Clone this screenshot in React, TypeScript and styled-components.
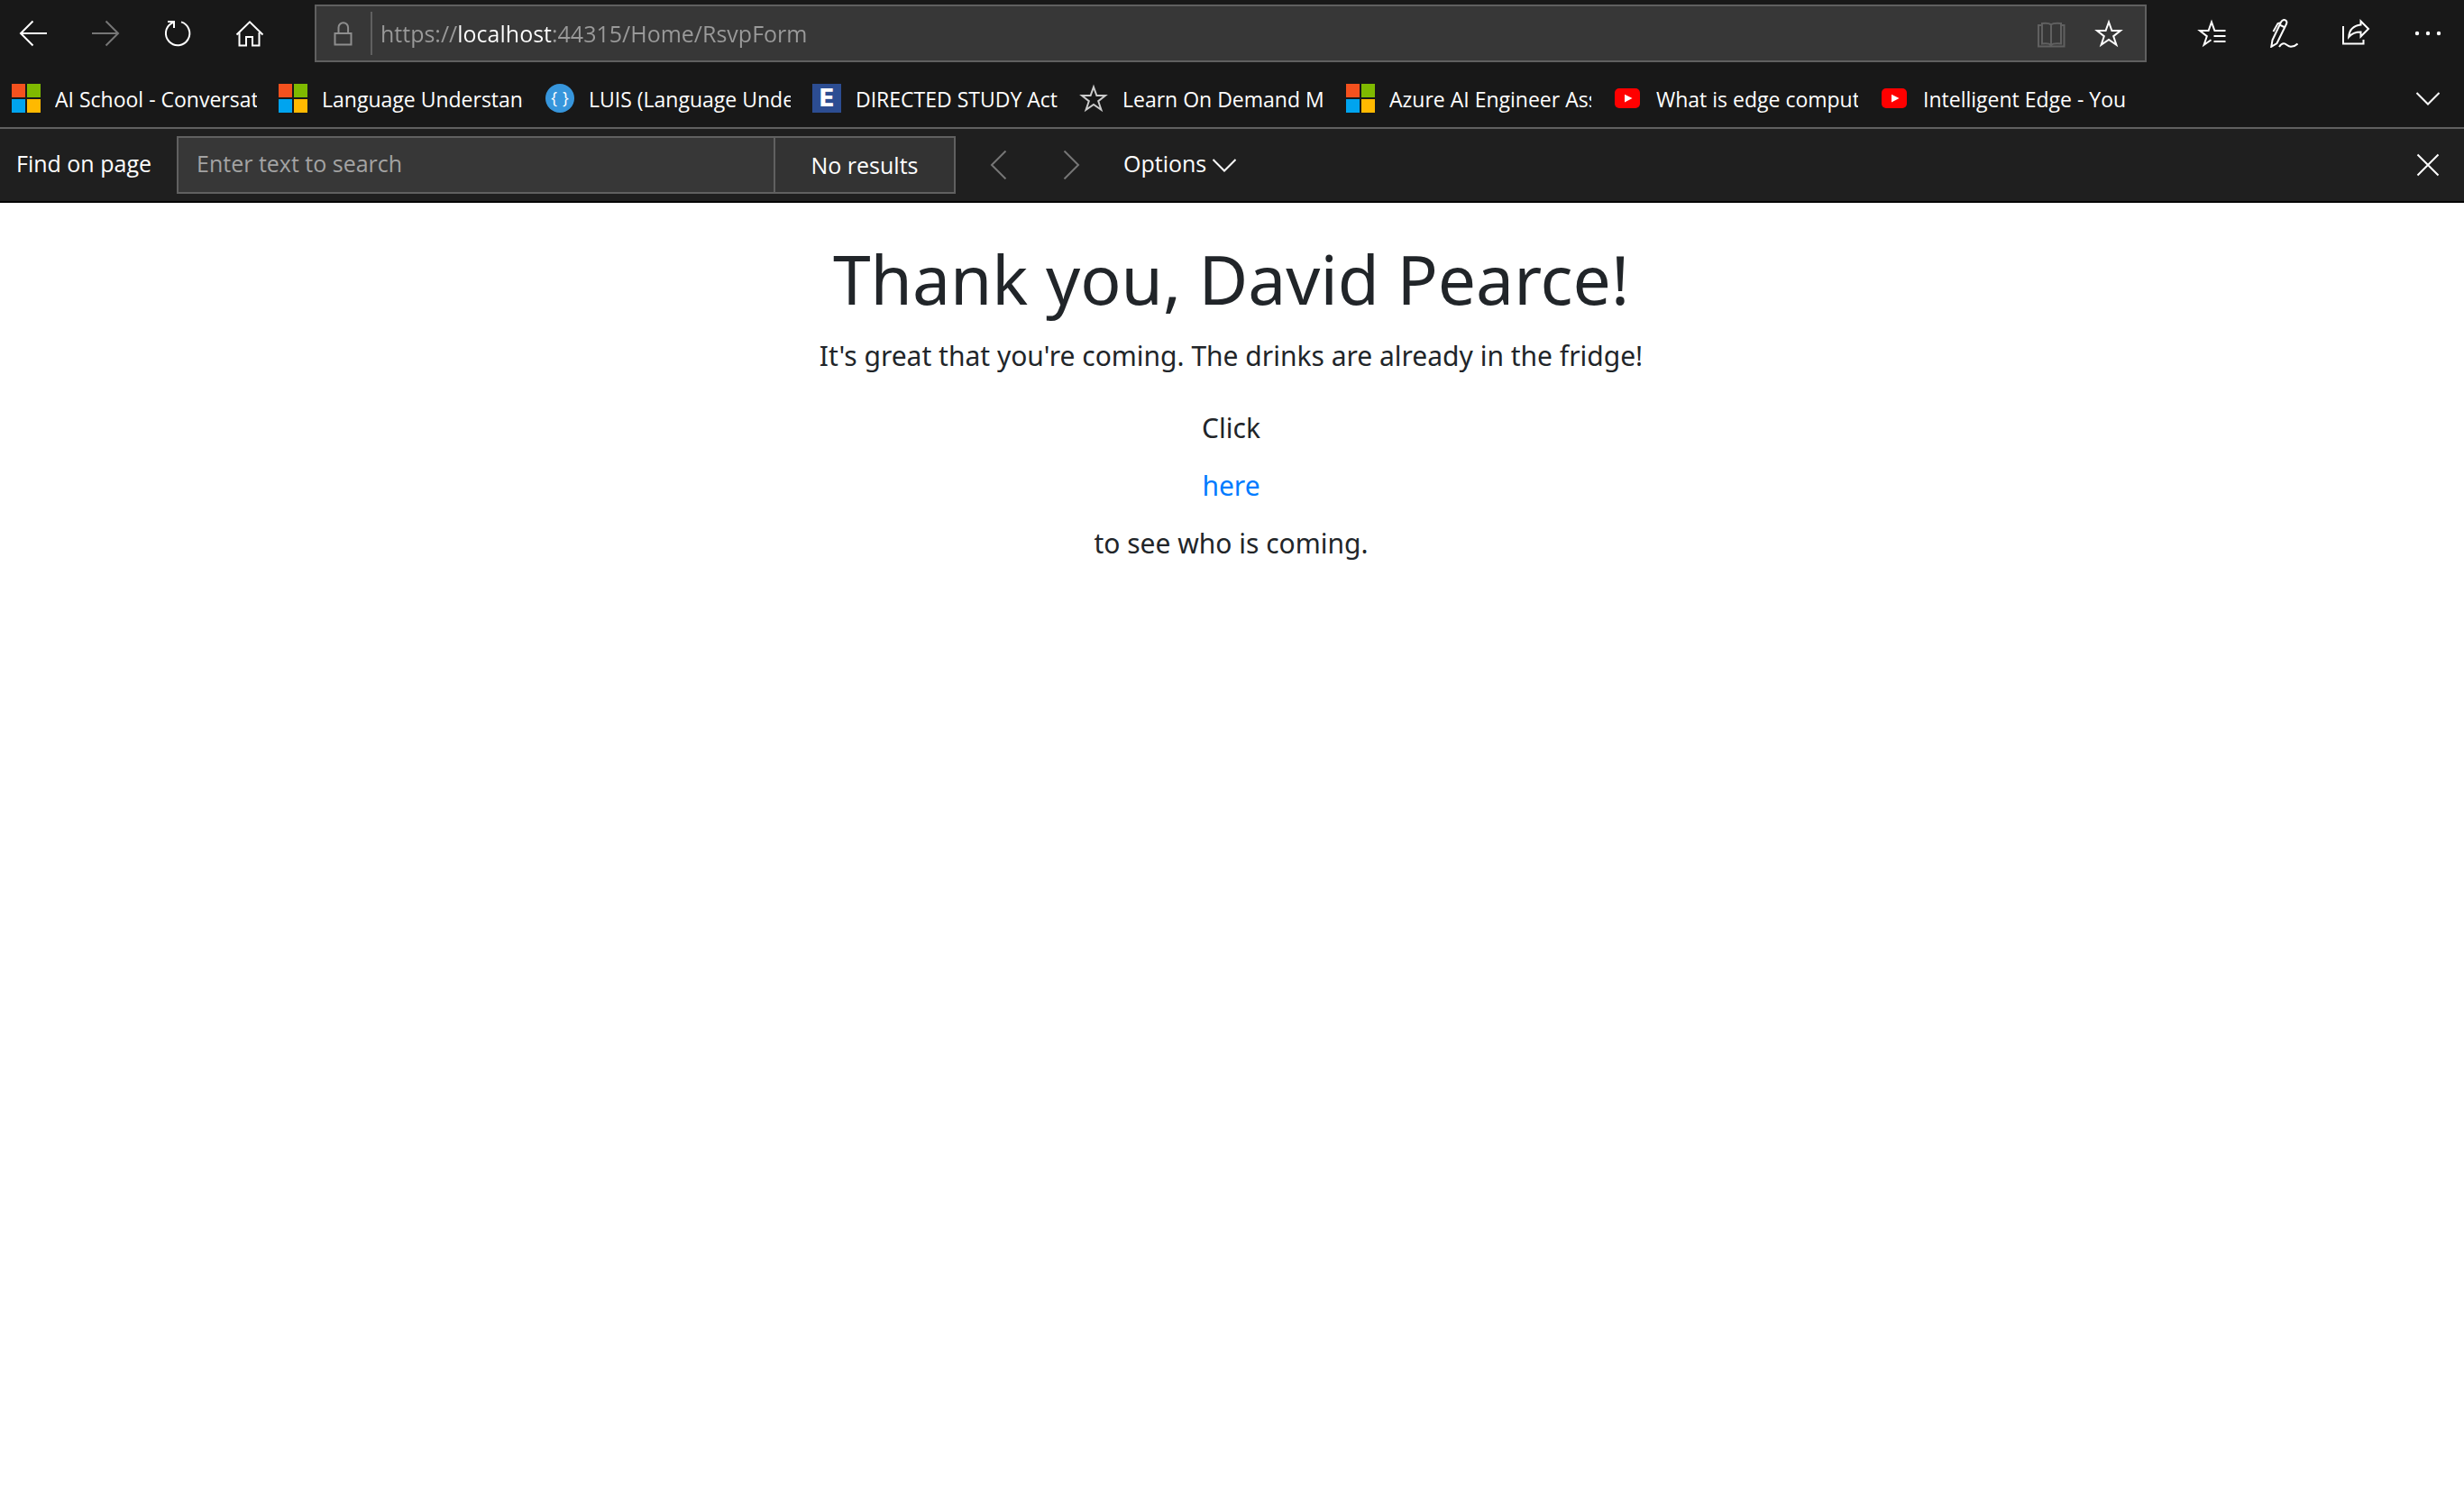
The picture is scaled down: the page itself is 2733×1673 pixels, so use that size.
import React from 'react';
import styled, { createGlobalStyle } from 'styled-components';

const GlobalStyle = createGlobalStyle`
  *, *::before, *::after { box-sizing: border-box; }
  body { margin: 0; background: #fff; }
  button, input { font: inherit; color: inherit; }
`;

const Chrome = styled.header`
  background: #181818;
  color: #fff;
  font-family: "Open Sans", "Noto Sans", sans-serif;
  font-size: 25px;
  line-height: 32px;
  border-bottom: 2px solid #000;
`;

const Toolbar = styled.nav`
  display: flex;
  align-items: center;
  gap: 56px;
  padding: 5px 24px 8px 21px;
`;

const Group = styled.div<{ $gap?: number }>`
  display: flex;
  align-items: center;
  gap: ${(p) => p.$gap ?? 48}px;
`;

const IconButton = styled.button<{ $color?: string }>`
  flex: none;
  display: flex;
  width: 32px;
  height: 32px;
  padding: 0;
  border: 0;
  background: none;
  color: ${(p) => p.$color ?? '#fff'};
`;

const Glyph = styled.svg`
  flex: none;
  display: block;
  width: 32px;
  height: 32px;
  fill: none;
  stroke: currentColor;
  stroke-width: 2;
  stroke-miterlimit: 10;
`;

const AddressBar = styled.div`
  flex: 1;
  min-width: 0;
  height: 64px;
  display: flex;
  align-items: center;
  padding: 0 24px 0 14px;
  background: #373737;
  border: 2px solid #606060;
`;

const LockBox = styled.span`
  display: flex;
  height: 48px;
  align-items: center;
  padding-right: 14px;
  border-right: 2px solid #606060;
  color: #8e8e8e;
`;

const AddressInput = styled.input`
  flex: 1;
  min-width: 0;
  height: 40px;
  margin-left: 9px;
  padding: 0;
  border: 0;
  outline: 0;
  color: transparent;
  caret-color: #fff;
  background: linear-gradient(90deg, #9a9a9a 85px, #fff 85px 190px, #9a9a9a 190px);
  -webkit-background-clip: text;
  background-clip: text;
`;

const FavoritesBar = styled.nav`
  display: flex;
  align-items: center;
  justify-content: space-between;
  height: 66px;
  padding: 0 24px 0 13px;
  border-bottom: 2px solid #606060;
  font-size: 23px;
`;

const Favorite = styled.a`
  display: flex;
  align-items: center;
  gap: 16px;
  color: #fff;
  text-decoration: none;
`;

const FavoriteTitle = styled.span`
  width: 224px;
  padding-top: 2px;
  overflow: hidden;
  white-space: nowrap;
`;

const MicrosoftMark = styled.span`
  width: 32px;
  height: 32px;
  display: grid;
  grid-template-columns: 1fr 1fr;
  gap: 2px;
`;

const Tile = styled.i<{ $color: string }>`
  background: ${(p) => p.$color};
`;

const LuisMark = styled.span`
  width: 32px;
  height: 32px;
  display: flex;
  justify-content: center;
  gap: 6px;
  border-radius: 50%;
  background: #3796dc;
  font-size: 18px;
  line-height: 30px;
`;

const StudyMark = styled.span`
  width: 32px;
  height: 32px;
  background: #2c4d92;
  font: bold 26px/32px "DejaVu Sans", sans-serif;
  text-align: center;
`;

const FindBar = styled.form`
  display: flex;
  align-items: center;
  height: 80px;
  padding: 0 24px 0 18px;
  background: #1f1f1f;
`;

const FindLabel = styled.label`
  width: 178px;
  padding-bottom: 4px;
`;

const FindInput = styled.input`
  flex: 0 1 664px;
  min-width: 0;
  height: 64px;
  padding: 0 20px 4px;
  background: #373737;
  border: 2px solid #606060;
  border-radius: 0;
  outline: 0;
  &::placeholder { color: #a3a3a3; opacity: 1; }
`;

const FindResult = styled.output`
  width: 200px;
  height: 64px;
  margin-right: 32px;
  display: flex;
  align-items: center;
  justify-content: center;
  background: #333;
  border: 2px solid #606060;
  border-left: 0;
`;

const OptionsButton = styled.button`
  display: flex;
  align-items: center;
  gap: 4px;
  margin: 0 auto 0 42px;
  padding: 0;
  border: 0;
  background: none;
`;

const OptionsText = styled.span`
  padding-bottom: 4px;
`;

const Page = styled.main`
  padding: 36px 34px 36px 32px;
  color: #212529;
  font-family: "Noto Sans", "Open Sans", sans-serif;
  font-size: 30px;
  line-height: 48px;
  text-align: center;
`;

const Title = styled.h1`
  margin: 0 0 14px;
  font-size: 75px;
  line-height: 96px;
  font-weight: 400;
`;

const Message = styled.p`
  margin: 0 0 32px;
`;

const Invite = styled.div`
  display: flex;
  flex-direction: column;
  align-items: center;
  gap: 16px;
`;

const PageLink = styled.a`
  color: #007bff;
  text-decoration: none;
`;

const STAR = 'M16 3.5 19.4 13H29l-7.8 6.2 3.2 9.6L16 23l-8.400 5.800 3.200-9.600L3 13h9.600z';

function Icon({ d }: { d: string }) {
  return (
    <Glyph viewBox="0 0 32 32" aria-hidden="true">
      <path d={d} />
    </Glyph>
  );
}

const PATHS = {
  back: 'M31 16H2M15.500 2.500 2 16l13.500 13.500',
  forward: 'M1 16h29M16.500 2.500 30 16 16.500 29.500',
  refresh: 'M20 3.400A13.200 13.200 0 1 1 9.500 4.600L12 3.500M5 3h7v7',
  home: 'M1.500 17.500 16 3.300l14.500 14.200M4.500 15v14.500H12V20h7v9.500h7.500V15',
  lock: 'M6.500 16h18v12.500h-18zM10.500 16V9.500a5.300 5.300 0 0 1 10.600 0V16',
  book: 'M6 7H2v23.500h28.500V7H27M16 6.500C14 4.500 10 4.500 6 5v22.500c4-.5 8-.5 10 1.500 2-2 6-2 11-1.500V5C22 4.500 18 4.500 16 6.500V29',
  starList: 'M31.500 13H19.400L16 3.500 12.600 13H3l7.800 6.200-3.200 9.600L15.500 23.300M18.500 19h13M18.500 25h13',
  pen: 'M3.500 23.500 13 3.500C14.500 1 16.500.5 18.500 1.800c1.500 1.200 1 2.700.3 4.200L8.500 27 2.300 30.800zM13.500 4 9.500 5 4.500 14M12.500 7l5 2.500M11 31c2-3 4-4.200 6-3.600s4 3.500 7 3.400 5-.8 7.500-3.300',
  share: 'M2 8v19.500h22.500V23M21.500 2.500 30 11l-8.500 8.500v-5c-6 0-10 1.500-13.300 5.500.5-7.500 4.800-12.500 13.300-13.500z',
  chevronDown: 'M3.500 10 16 22.500 28.500 10',
  chevronLeft: 'M23.500.5 8 16l15.500 15.500',
  chevronRight: 'M8.500.5 24 16 8.500 31.500',
  close: 'M4.500 4.500l23 23M27.500 4.500l-23 23',
};

const Microsoft = () => (
  <MicrosoftMark>
    <Tile $color="#f4511e" />
    <Tile $color="#7fba00" />
    <Tile $color="#00a4ef" />
    <Tile $color="#ffb900" />
  </MicrosoftMark>
);

const YouTube = () => (
  <Glyph viewBox="0 0 32 32" aria-hidden="true">
    <rect x="2" y="5" width="28" height="22" rx="5" fill="#f00" stroke="none" />
    <path d="M13 11.800v8.600l8.500-4.300z" fill="#fff" stroke="none" />
  </Glyph>
);

const Luis = () => (
  <LuisMark>
    <span>{'{'}</span>
    <span>{'}'}</span>
  </LuisMark>
);

const GreyStar = styled(Glyph)`
  color: #ccc;
`;

const favorites = [
  { title: 'AI School - Conversat', mark: <Microsoft /> },
  { title: 'Language Understand', mark: <Microsoft /> },
  { title: 'LUIS (Language Unde', mark: <Luis /> },
  { title: 'DIRECTED STUDY Act', mark: <StudyMark>E</StudyMark> },
  { title: 'Learn On Demand Mo', mark: <GreyStar viewBox="0 0 32 32"><path d={STAR} /></GreyStar> },
  { title: 'Azure AI Engineer Ass', mark: <Microsoft /> },
  { title: 'What is edge comput', mark: <YouTube /> },
  { title: 'Intelligent Edge - You', mark: <YouTube /> },
];

export default function App() {
  return (
    <>
      <GlobalStyle />
      <Chrome>
        <Toolbar aria-label="Browser">
          <Group>
            <IconButton aria-label="Back"><Icon d={PATHS.back} /></IconButton>
            <IconButton aria-label="Forward" $color="#767676"><Icon d={PATHS.forward} /></IconButton>
            <IconButton aria-label="Refresh"><Icon d={PATHS.refresh} /></IconButton>
            <IconButton aria-label="Home"><Icon d={PATHS.home} /></IconButton>
          </Group>
          <AddressBar>
            <LockBox><Icon d={PATHS.lock} /></LockBox>
            <AddressInput aria-label="Address" defaultValue="https://localhost:44315/Home/RsvpForm" spellCheck={false} />
            <Group $gap={32}>
              <IconButton aria-label="Reading view" $color="#606060"><Icon d={PATHS.book} /></IconButton>
              <IconButton aria-label="Add to favorites"><Icon d={STAR} /></IconButton>
            </Group>
          </AddressBar>
          <Group>
            <IconButton aria-label="Favorites"><Icon d={PATHS.starList} /></IconButton>
            <IconButton aria-label="Add notes"><Icon d={PATHS.pen} /></IconButton>
            <IconButton aria-label="Share"><Icon d={PATHS.share} /></IconButton>
            <IconButton aria-label="Settings and more">
              <Glyph viewBox="0 0 32 32" aria-hidden="true">
                {[4, 16, 28].map((x) => (
                  <circle key={x} cx={x} cy="16" r="2.200" fill="currentColor" stroke="none" />
                ))}
              </Glyph>
            </IconButton>
          </Group>
        </Toolbar>
        <FavoritesBar aria-label="Favorites bar">
          <Group $gap={24}>
            {favorites.map((f) => (
              <Favorite key={f.title} href="#">
                {f.mark}
                <FavoriteTitle>{f.title}</FavoriteTitle>
              </Favorite>
            ))}
          </Group>
          <IconButton aria-label="More favorites"><Icon d={PATHS.chevronDown} /></IconButton>
        </FavoritesBar>
        <FindBar onSubmit={(e) => e.preventDefault()}>
          <FindLabel htmlFor="find">Find on page</FindLabel>
          <FindInput id="find" placeholder="Enter text to search" />
          <FindResult htmlFor="find">No results</FindResult>
          <Group>
            <IconButton type="button" aria-label="Previous result" $color="#767676"><Icon d={PATHS.chevronLeft} /></IconButton>
            <IconButton type="button" aria-label="Next result" $color="#767676"><Icon d={PATHS.chevronRight} /></IconButton>
          </Group>
          <OptionsButton type="button">
            <OptionsText>Options</OptionsText>
            <Icon d={PATHS.chevronDown} />
          </OptionsButton>
          <IconButton type="button" aria-label="Close"><Icon d={PATHS.close} /></IconButton>
        </FindBar>
      </Chrome>
      <Page>
        <Title>Thank you, David Pearce!</Title>
        <Message>It's great that you're coming. The drinks are already in the fridge!</Message>
        <Invite>
          <span>Click</span>
          <PageLink href="#">here</PageLink>
          <span>to see who is coming.</span>
        </Invite>
      </Page>
    </>
  );
}
